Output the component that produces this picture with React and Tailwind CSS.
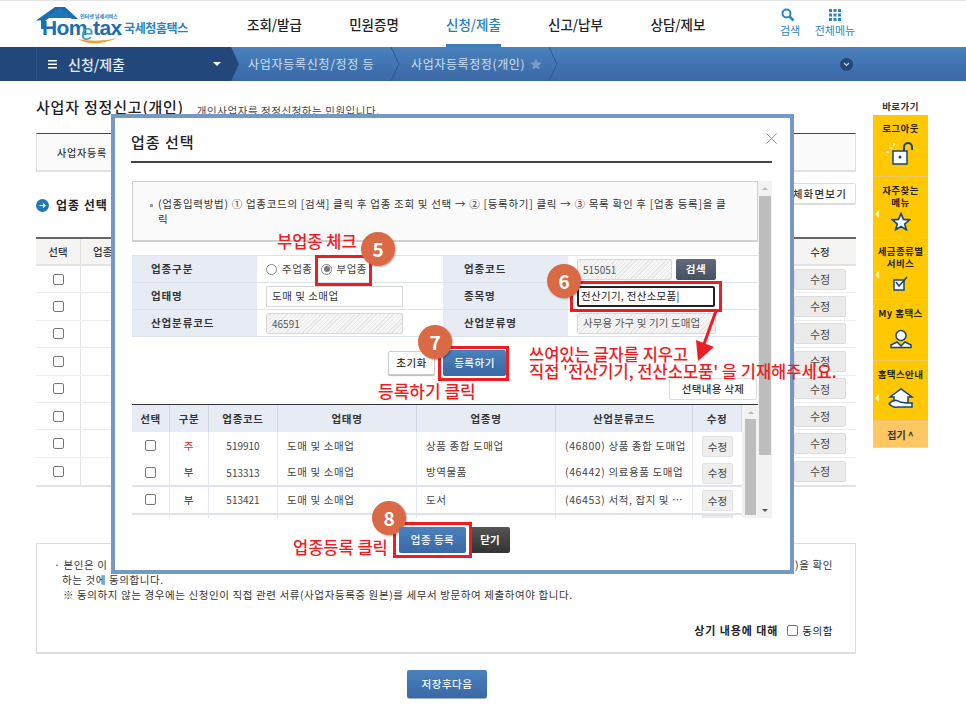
const FONT = { fontFamily: '"Noto Sans CJK KR", "Liberation Sans", sans-serif' };
const LATIN = { fontFamily: '"Liberation Sans", sans-serif' };

function Logo() {
  return (
    <div className="relative w-[160px] h-[44px] shrink-0 ml-[36px]">
      <svg className="absolute left-0 top-0" width="160" height="44" viewBox="0 0 160 44">
        <path d="M0 18.500 L19 5 L29 5 L42 17 L36 17 L24 8 L9 19 L9 27 L5 27 L5 18.500 Z" fill="#1a6fb0" />
        <path d="M12 15 L24 6 L36 16 L12 16 Z" fill="#1f77b8" />
        <path d="M42 37 Q56 46 82 36 Q60 41 42 37 Z" fill="#f0a030" />
        <circle cx="83" cy="32" r="1.500" fill="#5cb531" />
      </svg>
      <span className="absolute left-[6px] top-[14px] text-[21px] font-bold leading-[24px] text-[#1a6fb0] tracking-[-0.6px]" style={LATIN}>Hom</span>
      <span className="absolute left-[45px] top-[20px] text-[22px] italic leading-[22px] text-[#36a0d0]" style={LATIN}>e</span>
      <span className="absolute left-[57px] top-[14px] text-[21px] font-bold leading-[24px] text-[#1a6fb0] tracking-[-0.6px]" style={LATIN}>tax</span>
      <span className="absolute left-[44px] top-[11px] text-[5px] leading-[6px] text-[#2a78b5] font-bold whitespace-nowrap">인터넷 납세서비스</span>
      <span className="absolute left-[88px] top-[17px] text-[12px] leading-[18px] font-bold text-[#2a84c0] whitespace-nowrap tracking-[-0.4px]">국세청홈택스</span>
    </div>
  );
}

function Header() {
  const items = [['조회/발급', 'w-[55px]', false], ['민원증명', 'w-[50px]', false], ['신청/제출', 'w-[55px]', true], ['신고/납부', 'w-[55px]', false], ['상담/제보', 'w-[56px]', false]];
  return (
    <div className="h-[47px] border-t border-[#e4e4e4] bg-white flex items-center">
      <Logo />
      <nav className="flex ml-[51px] gap-[47px] h-full">
        {items.map(([t, w, on]) => (
          <div key={t} className={`relative h-[46px] flex items-center justify-center text-[13.500px] font-medium whitespace-nowrap ${w} ${on ? 'text-[#2b7cb8]' : 'text-[#222]'}`}>
            {t}
            {on && <span className="absolute left-0 right-0 bottom-0 h-[3px] bg-[#3d7db8]" />}
          </div>
        ))}
      </nav>
      <div className="flex ml-[73px] gap-[13px] text-[#2b85c0] text-[11px] leading-[14px] -mt-[4px]">
        <div className="flex flex-col items-center w-[22px]">
          <svg width="14" height="14" viewBox="0 0 14 14" className="-ml-[4px] mb-[1px]"><circle cx="5.500" cy="5.500" r="4" fill="none" stroke="#2b85c0" strokeWidth="2" /><path d="M8.500 8.500 L12.500 12.500" stroke="#2b85c0" strokeWidth="2.500" /></svg>
          <span className="whitespace-nowrap">검색</span>
        </div>
        <div className="flex flex-col items-center w-[42px]">
          <svg width="12" height="12" viewBox="0 0 12 12" className="mt-[1px] mb-[2px]" fill="#2b85c0">
            {[0, 4.500, 9].map(y => [0, 4.500, 9].map(x => <rect key={`${x}-${y}`} x={x} y={y} width="3" height="3" />))}
          </svg>
          <span className="whitespace-nowrap">전체메뉴</span>
        </div>
      </div>
    </div>
  );
}

function Chevron() {
  return (
    <svg width="12" height="34" viewBox="0 0 12 34" className="absolute right-[-8px] top-0 z-10">
      <path d="M0 0 L8 17 L0 34" fill="none" stroke="#2a5a90" strokeWidth="1" />
    </svg>
  );
}

function SubBar() {
  return (
    <div className="h-[34px] flex bg-gradient-to-b from-[#4a81bd] to-[#3a68a5] text-[12px] text-[#cfe0f2]">
      <div className="relative w-[231px] h-full bg-[#22477a] flex items-center pl-[48px] text-white">
        <span className="absolute left-[36px] top-0 bottom-0 w-px bg-[#2c5488]" />
        <svg width="9" height="9" viewBox="0 0 9 9" className="mr-[11px]" fill="#fff"><rect y="0" width="9" height="1.500" /><rect y="3.500" width="9" height="1.500" /><rect y="7" width="9" height="1.500" /></svg>
        <span className="text-[14px] font-medium text-[#e4edf7]">신청/제출</span>
        <span className="absolute left-[213px] top-[15px] w-0 h-0 border-l-[4px] border-r-[4px] border-t-[4px] border-l-transparent border-r-transparent border-t-white" />
        <svg width="8" height="34" viewBox="0 0 8 34" className="absolute left-full top-0"><path d="M0 0 L8 17 L0 34 Z" fill="#22477a" /></svg>
      </div>
      <div className="relative w-[164px] flex items-center pl-[17px] whitespace-nowrap tracking-[0.7px]">사업자등록신청/정정 등<Chevron /></div>
      <div className="relative w-[158px] flex items-center pl-[16px] whitespace-nowrap tracking-[0.6px]">
        사업자등록정정(개인)
        <svg width="12" height="12" viewBox="0 0 24 24" className="ml-[5px]" fill="#7c9cc4"><path d="M12 1 L15.500 8.500 L23.500 9.500 L17.500 15 L19 23 L12 19 L5 23 L6.500 15 L.5 9.500 L8.500 8.500 Z" /></svg>
        <Chevron />
      </div>
      <div className="ml-[287px] flex items-center">
        <span className="w-[13px] h-[13px] rounded-full bg-[#22477a] flex items-center justify-center mt-[1px]">
          <svg width="7" height="5" viewBox="0 0 7 5"><path d="M1 1 L3.500 3.500 L6 1" fill="none" stroke="#c8d6e8" strokeWidth="1.200" /></svg>
        </span>
      </div>
    </div>
  );
}

function EditBtn() {
  return <span className="w-[52px] h-[21px] rounded-[2px] bg-[#ebebeb] border border-[#dddddd] text-[11px] text-[#444] flex items-center justify-center">수정</span>;
}

function Box({ cls = '' }) {
  return <span className={`block w-[11px] h-[11px] rounded-[2px] border border-[#777] bg-white ${cls}`} />;
}

function MainContent() {
  const rows = Array.from({ length: 8 });
  return (
    <div className="relative w-[820px] ml-[36px] text-[#333]">
      <div className="flex items-end pt-[18px] h-[35px]">
        <span className="text-[15px] font-medium text-[#222] leading-[18px] tracking-[0.8px]">사업자 정정신고(개인)</span>
        <span className="text-[10.500px] ml-[13px] leading-[14px] text-[#444] tracking-[0.55px] -mb-[2px]">개인사업자를 정정신청하는 민원입니다.</span>
      </div>
      <div className="mt-[17px] h-[39px] border-t border-t-[#444] border-x border-x-[#e0e0e0] border-b-2 border-b-[#e0e0e0] bg-[#fafafa] flex items-center pl-[20px] text-[10px] font-medium tracking-[0.8px]">사업자등록</div>
      <div className="mt-[14px] h-[38px] flex items-start justify-between">
        <div className="flex items-center text-[12px] font-bold text-[#222] tracking-[1px] mt-[10px]">
          <span className="w-[13px] h-[13px] rounded-full bg-[#2179b5] text-white flex items-center justify-center mr-[7px]">
            <svg width="7" height="7" viewBox="0 0 7 7"><path d="M0.500 3.500 H6 M4 1.500 L6 3.500 L4 5.500" fill="none" stroke="#fff" strokeWidth="1.200" /></svg>
          </span>
          업종 선택
        </div>
        <span className="w-[64px] h-[22px] -mt-[3px] border border-[#ddd] border-b-2 rounded-[2px] bg-white flex items-center justify-end pr-[8px] text-[10.500px] font-medium whitespace-nowrap overflow-hidden tracking-[1.2px]">체화면보기</span>
      </div>
      <div className="mt-[13px] border-t-2 border-t-[#666] border-b-2 border-b-[#e2e2e2]">
        <div className="h-[27px] flex items-center bg-[#f5f4f2] border-b-2 border-[#e2e2e2] text-[10.500px] font-medium">
          <span className="w-[45px] h-full flex items-center justify-center border-r border-[#e2e2e2]">선택</span>
          <span className="flex-1 pl-[12px]">업종</span>
          <span className="w-[72px] text-center">수정</span>
        </div>
        {rows.map((_, i) => (
          <div key={i} className={`h-[27.400px] flex items-center ${i < 7 ? 'border-b border-[#ececec]' : ''}`}>
            <span className="w-[45px] h-full flex items-center justify-center border-r border-[#e2e2e2]"><Box /></span>
            <span className="flex-1" />
            <span className="w-[72px] flex justify-center"><EditBtn /></span>
          </div>
        ))}
      </div>
      <div className="mt-[56px] h-[111px] border border-[#dddddd] border-b-2 pl-[17px] pr-[22px] pt-[13px] text-[10.500px] leading-[15px] text-[#333] relative tracking-[0.6px]">
        <p className="whitespace-nowrap flex justify-between"><span>· 본인은 이</span><span>)을 확인</span></p>
        <p className="pl-[8px]">하는 것에 동의합니다.</p>
        <p className="pl-[9px] whitespace-nowrap">※  동의하지 않는 경우에는 신청인이 직접 관련 서류(사업자등록증 원본)를 세무서 방문하여 제출하여야 합니다.</p>
        <div className="absolute right-[22px] bottom-[14px] flex items-center text-[#222]">
          <span className="font-bold text-[11px] tracking-[0.9px]">상기 내용에 대해</span>
          <Box cls="ml-[9px] mr-[4px]" />
          <span className="font-normal">동의함</span>
        </div>
      </div>
      <div className="flex justify-center mt-[16px] pb-[22px] pl-[2px]">
        <span className="w-[80px] h-[28px] rounded-[2px] bg-gradient-to-b from-[#4a81bd] to-[#3a68a5] shadow-[0_1px_0_#9fb4cc] text-white text-[10.500px] font-medium tracking-[0.5px] flex items-center justify-center">저장후다음</span>
      </div>
    </div>
  );
}

function Sidebar() {
  const items = [
    { h: 62, t: ['로그아웃'], icon: 'lock' },
    { h: 61, t: ['자주찾는', '메뉴'], icon: 'star', arrow: true },
    { h: 62, t: ['세금종류별', '서비스'], icon: 'check', arrow: true },
    { h: 61, t: ['My 홈택스'], icon: 'user' },
    { h: 60, t: ['홈택스안내'], icon: 'home', arrow: true },
  ];
  const icons = {
    lock: <svg width="30" height="24" viewBox="0 0 30 24" fill="none" stroke="#14457c" strokeWidth="1.500"><rect x="7" y="9" width="14" height="13" fill="#fff" /><circle cx="14" cy="15" r="1.500" fill="#14457c" stroke="none" /><path d="M18 9 V5 a4 4 0 0 1 8 0 V8" strokeWidth="2" /><path d="M0 10 H3 M4 5 L6 7 M8 1 V4" stroke="#fff" /></svg>,
    star: <svg width="20" height="19" viewBox="0 0 24 23"><path d="M12 2 L15 9 L22.500 9.500 L16.500 14.500 L18.500 21.500 L12 17.500 L5.500 21.500 L7.500 14.500 L1.500 9.500 L9 9 Z" fill="#fff" stroke="#14457c" strokeWidth="2" /></svg>,
    check: <svg width="16" height="15" viewBox="0 0 16 15"><rect x="1" y="4" width="10" height="10" fill="#fff" stroke="#14457c" strokeWidth="1.500" /><path d="M3 6 L6 10 L14 1" fill="none" stroke="#14457c" strokeWidth="1.500" /></svg>,
    user: <svg width="22" height="20" viewBox="0 0 22 20" fill="#fff" stroke="#14457c" strokeWidth="1.500"><circle cx="11" cy="6.500" r="5" /><path d="M1 18.500 V16 L7 13 L11 17 L15 13 L21 16 V18.500 Z" /></svg>,
    home: <svg width="26" height="22" viewBox="0 0 26 22" fill="#fff" stroke="#14457c" strokeWidth="1.500"><path d="M2 9 L13 1 L24 9 L20 9 V15 H6 V9 Z" /><path d="M1 16 Q6 10 12 14 L18 15 H24 V19 H10 Q5 20 1 16 Z" /></svg>,
  };
  return (
    <aside className="absolute left-[873px] top-[99px] w-[55px] text-[#222]">
      <div className="h-[16px] text-[9.500px] font-bold text-center leading-[15px] text-[#333] tracking-[0.4px]">바로가기</div>
      <div className="bg-[#ffc800]">
        {items.map((it, i) => (
          <div key={i} className="relative flex flex-col items-center pt-[7px] border-b border-[#eec76a]" style={{ height: it.h }}>
            <div className="text-[9.500px] font-bold leading-[12px] text-center whitespace-nowrap tracking-[0.4px]">{it.t.map(l => <div key={l}>{l}</div>)}</div>
            <div className="flex-1 flex items-center justify-center pb-[2px]">{icons[it.icon]}</div>
            {it.arrow && <span className="absolute left-[2px] top-[33px] w-0 h-0 border-y-[4px] border-r-[4px] border-y-transparent border-r-[#fff2a8]" />}
          </div>
        ))}
      </div>
      <div className="h-[27px] bg-[#ffc764] border-b border-[#f1dc9a] flex items-center justify-center text-[10px] font-bold text-[#333]">접기 ^</div>
    </aside>
  );
}

function Th({ children }) {
  return <div className="bg-[#e6ebf4] font-bold text-[10.500px] tracking-[0.7px] text-[#333] flex items-center justify-center border-r border-[#d3dbe8]">{children}</div>;
}

function Hatch({ children, cls = '' }) {
  return <div className={`h-[21px] border border-[#d8d8d8] rounded-[2px] text-[#555] flex items-center whitespace-nowrap overflow-hidden bg-[repeating-linear-gradient(135deg,#f6f6f6_0,#f6f6f6_2px,#e8e8e8_2px,#e8e8e8_3px)] ${cls}`}>{children}</div>;
}

function FormTable() {
  const lab = 'bg-[#e6ebf4] font-bold text-[10.500px] tracking-[0.9px] text-[#333] flex items-center pl-[19px]';
  const lab2 = 'bg-[#e6ebf4] font-bold text-[10.500px] tracking-[0.9px] text-[#333] flex items-center pl-[21px]';
  const val = 'flex items-center pl-[9px] bg-white';
  return (
    <div className="grid grid-cols-[125px_186px_125px_1fr] grid-rows-3 h-[82px] w-[626px] ml-px mt-[13px] gap-y-px bg-[#dde3ec] border-y border-[#dde3ec] text-[10.500px] tracking-[0.5px]">
      <div className={lab}>업종구분</div>
      <div className={val}>
        <span className="w-[11px] h-[11px] rounded-full border border-[#888] bg-white" />
        <span className="ml-[5px] text-[#444]">주업종</span>
        <span className="ml-[9px] w-[11px] h-[11px] rounded-full border border-[#888] bg-white flex items-center justify-center"><span className="w-[6px] h-[6px] rounded-full bg-[#777]" /></span>
        <span className="ml-[4px] text-[#444]">부업종</span>
      </div>
      <div className={lab2}>업종코드</div>
      <div className={val}>
        <Hatch cls="w-[95px] text-[10px] px-[5px] tracking-normal">515051</Hatch>
        <span className="ml-[4px] w-[40px] h-[21px] rounded-[2px] bg-gradient-to-b from-[#5f6a7c] to-[#47505f] text-white font-bold flex items-center justify-center">검색</span>
      </div>
      <div className={lab}>업태명</div>
      <div className={val}><div className="w-[137px] h-[21px] border border-[#d8d8d8] flex items-center px-[5px] text-[#333]">도매 및 소매업</div></div>
      <div className={lab2}>종목명</div>
      <div className={val}><div className="w-[138px] h-[21px] border-2 border-[#222] rounded-[2px] flex items-center px-[2px] text-[#222] whitespace-nowrap tracking-[0.3px]">전산기기, 전산소모품|</div></div>
      <div className={lab}>산업분류코드</div>
      <div className={val}><Hatch cls="w-[137px] text-[10px] px-[5px] tracking-normal">46591</Hatch></div>
      <div className={lab2}>산업분류명</div>
      <div className={val}><Hatch cls="w-[139px] px-[5px] tracking-[0.1px]">사무용 가구 및 기기 도매업</Hatch></div>
    </div>
  );
}

function InnerTable() {
  const cols = 'grid grid-cols-[38px_39px_69px_139px_139px_137px_49px]';
  const rows = [
    ['주', '519910', '도매 및 소매업', '상품 종합 도매업', '(46800) 상품 종합 도매업', false],
    ['부', '513313', '도매 및 소매업', '방역물품', '(46442) 의료용품 도매업', true],
    ['부', '513421', '도매 및 소매업', '도서', '(46453) 서적, 잡지 및 ⋯', true],
  ];
  const cell = 'border-r border-[#e4e8f0]';
  return (
    <div className="relative h-[114px] w-[626px] ml-px overflow-hidden border-t border-t-[#333] text-[10.500px] tracking-[0.6px] text-[#444]">
      <div className={`${cols} h-[27px]`}>
        {['선택', '구분', '업종코드', '업태명', '업종명', '산업분류코드', '수정'].map(h => <Th key={h}>{h}</Th>)}
      </div>
      {rows.map((r, i) => (
        <div key={i} className={`${cols} h-[27.500px] ${r[5] ? 'border-b-2 border-[#dfe4ec]' : ''}`}>
          <div className={`flex items-center justify-center ${cell}`}><Box /></div>
          <div className={`flex items-center justify-center ${cell} ${i === 0 ? 'text-[#e03030]' : 'text-[#333]'}`}>{r[0]}</div>
          <div className={`flex items-center justify-center ${cell} text-[10px] tracking-normal`}>{r[1]}</div>
          <div className={`flex items-center pl-[9px] ${cell}`}>{r[2]}</div>
          <div className={`flex items-center pl-[9px] ${cell} whitespace-nowrap`}>{r[3]}</div>
          <div className={`flex items-center pl-[9px] ${cell} whitespace-nowrap`}>{r[4]}</div>
          <div className="flex items-center justify-center"><span className="w-[31px] h-[21px] rounded-[2px] bg-[#eeeeee] border border-[#e2e2e2] flex items-center justify-center mt-[2px] tracking-normal">수정</span></div>
        </div>
      ))}
      <div className={`${cols} h-[6px]`}>
        <div className={cell} /><div className={cell} /><div className={cell} /><div className={cell} /><div className={cell} /><div className={cell} />
        <div className="flex justify-center"><span className="w-[31px] h-[6px] bg-[#eeeeee] border border-[#e2e2e2]" /></div>
      </div>
      <div className="absolute left-[610px] top-0 bottom-0 w-[16px] bg-[#f2f2f2] pl-[3px]">
        <span className="block ml-[3px] mt-[6px] w-0 h-0 border-x-[3px] border-b-[3px] border-x-transparent border-b-[#bbb]" />
        <span className="block mt-[5px] w-[11px] h-[96px] bg-[#bdbdbd]" />
      </div>
    </div>
  );
}

function OuterScroll() {
  return (
    <div className="absolute left-[627px] top-0 w-[14px] h-[337px] bg-[#f2f2f2] flex flex-col items-center">
      <span className="mt-[6px] w-0 h-0 border-x-[3px] border-b-[3px] border-x-transparent border-b-[#bbb]" />
      <span className="mt-[6px] w-[12px] h-[259px] bg-[#bdbdbd]" />
      <span className="absolute bottom-[6px] w-0 h-0 border-x-[3px] border-t-[3px] border-x-transparent border-t-[#555]" />
    </div>
  );
}

function Modal() {
  return (
    <div className="absolute left-[111px] top-[114px] w-[683px] h-[460px] border-4 border-[#7698c4] bg-white">
      <div className="ml-[16px] mr-[18px] h-[45px] border-b-2 border-[#444] flex items-center text-[15px] font-medium text-[#222] tracking-[1px] relative pt-[6px]">
        업종 선택
        <svg width="11" height="11" viewBox="0 0 11 11" className="absolute right-[-5px] top-[15px]"><path d="M0.500 0.500 L10.500 10.500 M10.500 0.500 L0.500 10.500" stroke="#8a90a0" strokeWidth="1" /></svg>
      </div>
      <div className="relative ml-[16px] mt-[18px] h-[337px] w-[641px] overflow-hidden">
        <div className="ml-px w-[626px] h-[61px] border border-[#cfcfcf] border-b-2 bg-[#fafafa] pl-[17px] pt-[14px] text-[10.500px] leading-[15px] tracking-[0.7px] text-[#333] whitespace-nowrap">
          <span className="inline-block w-[3px] h-[3px] bg-[#999] mr-[5px] align-middle" />(업종입력방법) ① 업종코드의 [검색] 클릭 후 업종 조회 및 선택 → ② [등록하기] 클릭 → ③ 목록 확인 후 [업종 등록]을 클<br />
          <span className="pl-[8px]">릭</span>
        </div>
        <FormTable />
        <div className="relative h-[67px] w-[626px] ml-px">
          <div className="flex pt-[14px] pl-[256px]">
            <span className="w-[47px] h-[24px] rounded-[2px] border border-[#ccc] bg-white shadow-[0_1px_1px_#bbb] text-[10.500px] font-medium text-[#333] tracking-[0.5px] flex items-center justify-center">초기화</span>
            <span className="ml-[8px] w-[63px] h-[26px] -mt-px rounded-[2px] bg-gradient-to-b from-[#4a81bd] to-[#3a68a5] text-white text-[10.500px] font-medium tracking-[0.5px] flex items-center justify-center">등록하기</span>
          </div>
          <span className="absolute right-[1px] top-[41px] w-[88px] h-[22px] border border-[#ddd] rounded-[2px] bg-white text-[10.500px] font-medium text-[#333] tracking-[0.3px] flex items-center justify-center whitespace-nowrap">선택내용 삭제</span>
        </div>
        <InnerTable />
        <OuterScroll />
      </div>
      <div className="flex justify-center mt-[9px] pl-[4px]">
        <span className="w-[67px] h-[26px] rounded-[2px] bg-gradient-to-b from-[#4a81bd] to-[#3a68a5] text-white text-[10.500px] tracking-[0.5px] font-medium flex items-center justify-center z-10">업종 등록</span>
        <span className="ml-[4px] w-[40px] h-[26px] rounded-[2px] bg-gradient-to-b from-[#555] to-[#333] text-white text-[10.500px] font-bold flex items-center justify-center">닫기</span>
      </div>
    </div>
  );
}

function Step({ n, x, y }) {
  return <span className="absolute w-[34px] h-[34px] rounded-full bg-[#d96a45] text-white text-[19px] font-bold flex items-center justify-center shadow-[1px_1px_2px_rgba(0,0,0,0.3)]" style={{ left: x, top: y }}>{n}</span>;
}

function Rect({ x, y, w, h }) {
  return <span className="absolute border-[3px] border-[#ee1c25]" style={{ left: x, top: y, width: w, height: h }} />;
}

function Note({ x, y, size = 14, children }) {
  return <span className="absolute whitespace-nowrap font-medium text-[#ee1c25]" style={{ left: x, top: y, fontSize: size, lineHeight: '18px' }}>{children}</span>;
}

function Annotations() {
  return (
    <>
      <Rect x={315} y={255} w={57} h={31} />
      <Rect x={570} y={281} w={152} h={31} />
      <Rect x={438} y={346} w={71} h={35} />
      <Rect x={393} y={522} w={79} h={36} />
      <Note x={277} y={232} size={16.5}>부업종 체크</Note>
      <Note x={378} y={382} size={17}>등록하기 클릭</Note>
      <Note x={293} y={538} size={16.5}>업종등록 클릭</Note>
      <Note x={529} y={345} size={16.5}>쓰여있는 글자를 지우고</Note>
      <Note x={529} y={362} size={16.5}>직접 '전산기기, 전산소모품' 을 기재해주세요.</Note>
      <svg className="absolute left-[690px] top-[308px]" width="30" height="55" viewBox="0 0 30 55">
        <path d="M26 3 L14 36" stroke="#ee1c25" strokeWidth="3" />
        <path d="M6 32 L24 39 L8 53 Z" fill="#ee1c25" />
      </svg>
      <Step n="5" x={361} y={232} />
      <Step n="6" x={547} y={264} />
      <Step n="7" x={418} y={325} />
      <Step n="8" x={372} y={501} />
    </>
  );
}

export default function App() {
  return (
    <div className="relative w-[966px] h-[719px] overflow-hidden bg-white" style={FONT}>
      <Header />
      <SubBar />
      <MainContent />
      <Sidebar />
      <Modal />
      <Annotations />
    </div>
  );
}
